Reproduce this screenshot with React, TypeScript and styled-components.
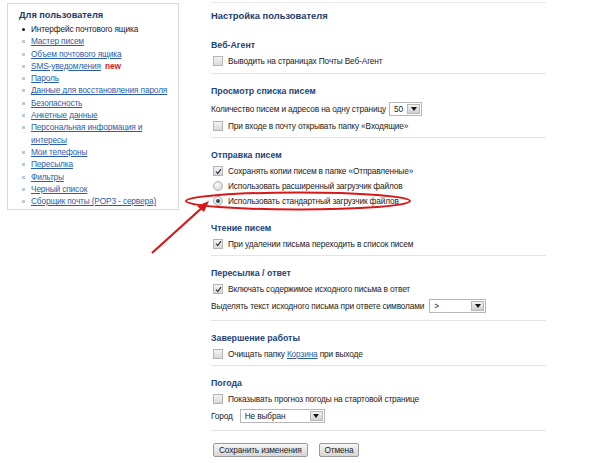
import { createGlobalStyle } from 'styled-components';
import styled from 'styled-components';

const Global = createGlobalStyle`
    html, body { margin: 0; padding: 0; background: #fff; }
    body {
        font-family: "Liberation Sans", Arial, sans-serif;
        font-size: 8.3px;
        letter-spacing: -0.14px;
        color: #222;
    }
`;

const Page = styled.div`
    position: relative;
    width: 600px;
    height: 463px;
    display: flex;
    align-items: flex-start;
    overflow: hidden;
`;

const Sidebar = styled.div`
    margin: 3px 0 0 7px;
    width: 172px;
    border: 1px solid #d9d9d9;
    padding: 4px 0 4px 11px;
    box-sizing: border-box;
    height: 207px;
`;

const SideTitle = styled.div`
    font-weight: bold;
    font-size: 9.2px;
    letter-spacing: 0;
    line-height: 14px;
    color: #1d3b6b;
    margin-bottom: 1px;
`;

const SideList = styled.ul`
    list-style: none;
    margin: 0;
    padding: 0;
`;

const SideItem = styled.li<{ $current?: boolean }>`
    position: relative;
    padding-left: 12px;
    line-height: 12.3px;
    &::before {
        content: "";
        position: absolute;
        left: 3px;
        top: 5px;
        width: 3px;
        height: 3px;
        border-radius: ${p => (p.$current ? '50%' : '0')};
        background: ${p => (p.$current ? '#111' : '#bccadd')};
    }
`;

const Link = styled.a`
    color: #2c5ea8;
    text-decoration: underline;
`;

const New = styled.span`
    color: #d41a1a;
    font-weight: bold;
    letter-spacing: 0;
    margin-left: 4px;
`;

const Main = styled.div`
    margin: 2px 0 0 32px;
    width: 335px;
    border-top: 1px solid #eaeaea;
`;

const Title = styled.div`
    font-weight: bold;
    font-size: 9.4px;
    letter-spacing: 0;
    line-height: 16px;
    color: #1d3b6b;
    margin: 5px 0 4px;
`;

const Section = styled.div`
    padding: 10px 0 4px;
    border-bottom: 1px solid #e4e4e4;
`;

const Heading = styled.div<{ $gap?: boolean }>`
    font-weight: bold;
    font-size: 8.8px;
    letter-spacing: 0;
    line-height: 14px;
    color: #1d4478;
    margin-top: ${p => (p.$gap ? '12px' : '0')};
    margin-bottom: 1.5px;
`;

const Row = styled.div`
    display: flex;
    align-items: center;
    height: 15px;
    padding-left: 2px;
    gap: 5px;
    white-space: nowrap;
`;

const Label = styled.span`
    white-space: nowrap;
`;

const FieldRow = styled.div`
    display: flex;
    align-items: center;
    height: 19px;
    white-space: nowrap;
`;

const Box = styled.span`
    width: 8px;
    height: 8px;
    border: 1px solid #b4b4b4;
    background: linear-gradient(#f4f4f4, #d9d9d9);
    display: inline-flex;
    align-items: center;
    justify-content: center;
    flex-shrink: 0;
`;

const Radio = styled.span<{ $on?: boolean }>`
    width: 8px;
    height: 8px;
    border-radius: 50%;
    border: 1px solid #b0b0b0;
    background: radial-gradient(circle at 40% 35%, #fafafa, #cfcfcf);
    display: inline-flex;
    align-items: center;
    justify-content: center;
    flex-shrink: 0;
    &::after {
        content: "";
        display: ${p => (p.$on ? 'block' : 'none')};
        width: 4px;
        height: 4px;
        border-radius: 50%;
        background: #3d4a5c;
    }
`;

const Select = styled.span<{ $w: number; $gap: number }>`
    display: inline-flex;
    align-items: stretch;
    width: ${p => p.$w}px;
    height: 14px;
    border: 1px solid #b7b7b7;
    background: #fff;
    margin-left: ${p => p.$gap}px;
    box-sizing: border-box;
`;

const SelectText = styled.span`
    flex: 1;
    padding-left: 4px;
    line-height: 12px;
`;

const SelectBtn = styled.span`
    width: 11px;
    margin: 1px;
    border: 1px solid #b7b7b7;
    background: linear-gradient(#f2f2f2, #cfcfcf);
    display: flex;
    align-items: center;
    justify-content: center;
    &::after {
        content: "";
        border-left: 3px solid transparent;
        border-right: 3px solid transparent;
        border-top: 4px solid #111;
    }
`;

const Buttons = styled.div`
    display: flex;
    gap: 11px;
    margin: 12px 0 0 2px;
`;

const Button = styled.button`
    font-family: "Liberation Sans", Arial, sans-serif;
    font-size: 8.3px;
    letter-spacing: -0.14px;
    height: 14px;
    padding: 0 5px;
    border: 1px solid #9a9a9a;
    border-radius: 2px;
    background: linear-gradient(#f7f7f7, #d6d6d6);
    color: #222;
    line-height: 12px;
`;

const Overlay = styled.svg`
    position: absolute;
    left: 0;
    top: 0;
    pointer-events: none;
`;

function Check({ on }: { on?: boolean }) {
    return (
        <Box>
            {on && (
                <svg width="7" height="7" viewBox="0 0 7 7">
                    <path d="M1 3.6 L2.8 5.6 L6 1.2" stroke="#2a3342" strokeWidth="1.2" fill="none" />
                </svg>
            )}
        </Box>
    );
}

function Dropdown({ value, width, gap }: { value: string; width: number; gap: number }) {
    return (
        <Select $w={width} $gap={gap}>
            <SelectText>{value}</SelectText>
            <SelectBtn />
        </Select>
    );
}

const menu = [
    'Мастер писем',
    'Объем почтового ящика',
    'SMS-уведомления',
    'Пароль',
    'Данные для восстановления пароля',
    'Безопасность',
    'Анкетные данные',
    'Персональная информация и интересы',
    'Мои телефоны',
    'Пересылка',
    'Фильтры',
    'Черный список',
    'Сборщик почты (POP3 - сервера)',
];

export default function App() {
    return (
        <Page>
            <Global />
            <Sidebar>
                <SideTitle>Для пользователя</SideTitle>
                <SideList>
                    <SideItem $current>Интерфейс почтового ящика</SideItem>
                    {menu.map(m => (
                        <SideItem key={m}>
                            <Link>{m}</Link>
                            {m === 'SMS-уведомления' && <New>new</New>}
                        </SideItem>
                    ))}
                </SideList>
            </Sidebar>

            <Main>
                <Title>Настройка пользователя</Title>

                <Section>
                    <Heading>Веб-Агент</Heading>
                    <Row><Check /><Label>Выводить на страницах Почты Веб-Агент</Label></Row>
                </Section>

                <Section>
                    <Heading>Просмотр списка писем</Heading>
                    <FieldRow>Количество писем и адресов на одну страницу<Dropdown value="50" width={33} gap={3} /></FieldRow>
                    <Row><Check /><Label>При входе в почту открывать папку «Входящие»</Label></Row>
                </Section>

                <Section>
                    <Heading>Отправка писем</Heading>
                    <Row><Check on /><Label>Сохранять копии писем в папке «Отправленные»</Label></Row>
                    <Row><Radio /><Label>Использовать расширенный загрузчик файлов</Label></Row>
                    <Row><Radio $on /><Label>Использовать стандартный загрузчик файлов</Label></Row>
                    <Heading $gap>Чтение писем</Heading>
                    <Row><Check on /><Label>При удалении письма переходить в список писем</Label></Row>
                </Section>

                <Section>
                    <Heading>Пересылка / ответ</Heading>
                    <Row><Check on /><Label>Включать содержимое исходного письма в ответ</Label></Row>
                    <FieldRow>Выделять текст исходного письма при ответе символами<Dropdown value=">" width={57} gap={5} /></FieldRow>
                </Section>

                <Section>
                    <Heading>Завершение работы</Heading>
                    <Row><Check /><Label>Очищать папку <Link>Корзина</Link> при выходе</Label></Row>
                </Section>

                <Section>
                    <Heading>Погода</Heading>
                    <Row><Check /><Label>Показывать прогноз погоды на стартовой странице</Label></Row>
                    <FieldRow>Город<Dropdown value="Не выбран" width={85} gap={7} /></FieldRow>
                </Section>

                <Buttons>
                    <Button>Сохранить изменения</Button>
                    <Button>Отмена</Button>
                </Buttons>
            </Main>

            <Overlay width="600" height="463" viewBox="0 0 600 463">
                <ellipse cx="298" cy="201" rx="112" ry="8.5" fill="none" stroke="#d81818" strokeWidth="2" />
                <line x1="152" y1="253" x2="204" y2="206" stroke="#d81818" strokeWidth="2.2" />
                <path d="M209 201 L197 206 L204 212 Z" fill="#d81818" />
            </Overlay>
        </Page>
    );
}
